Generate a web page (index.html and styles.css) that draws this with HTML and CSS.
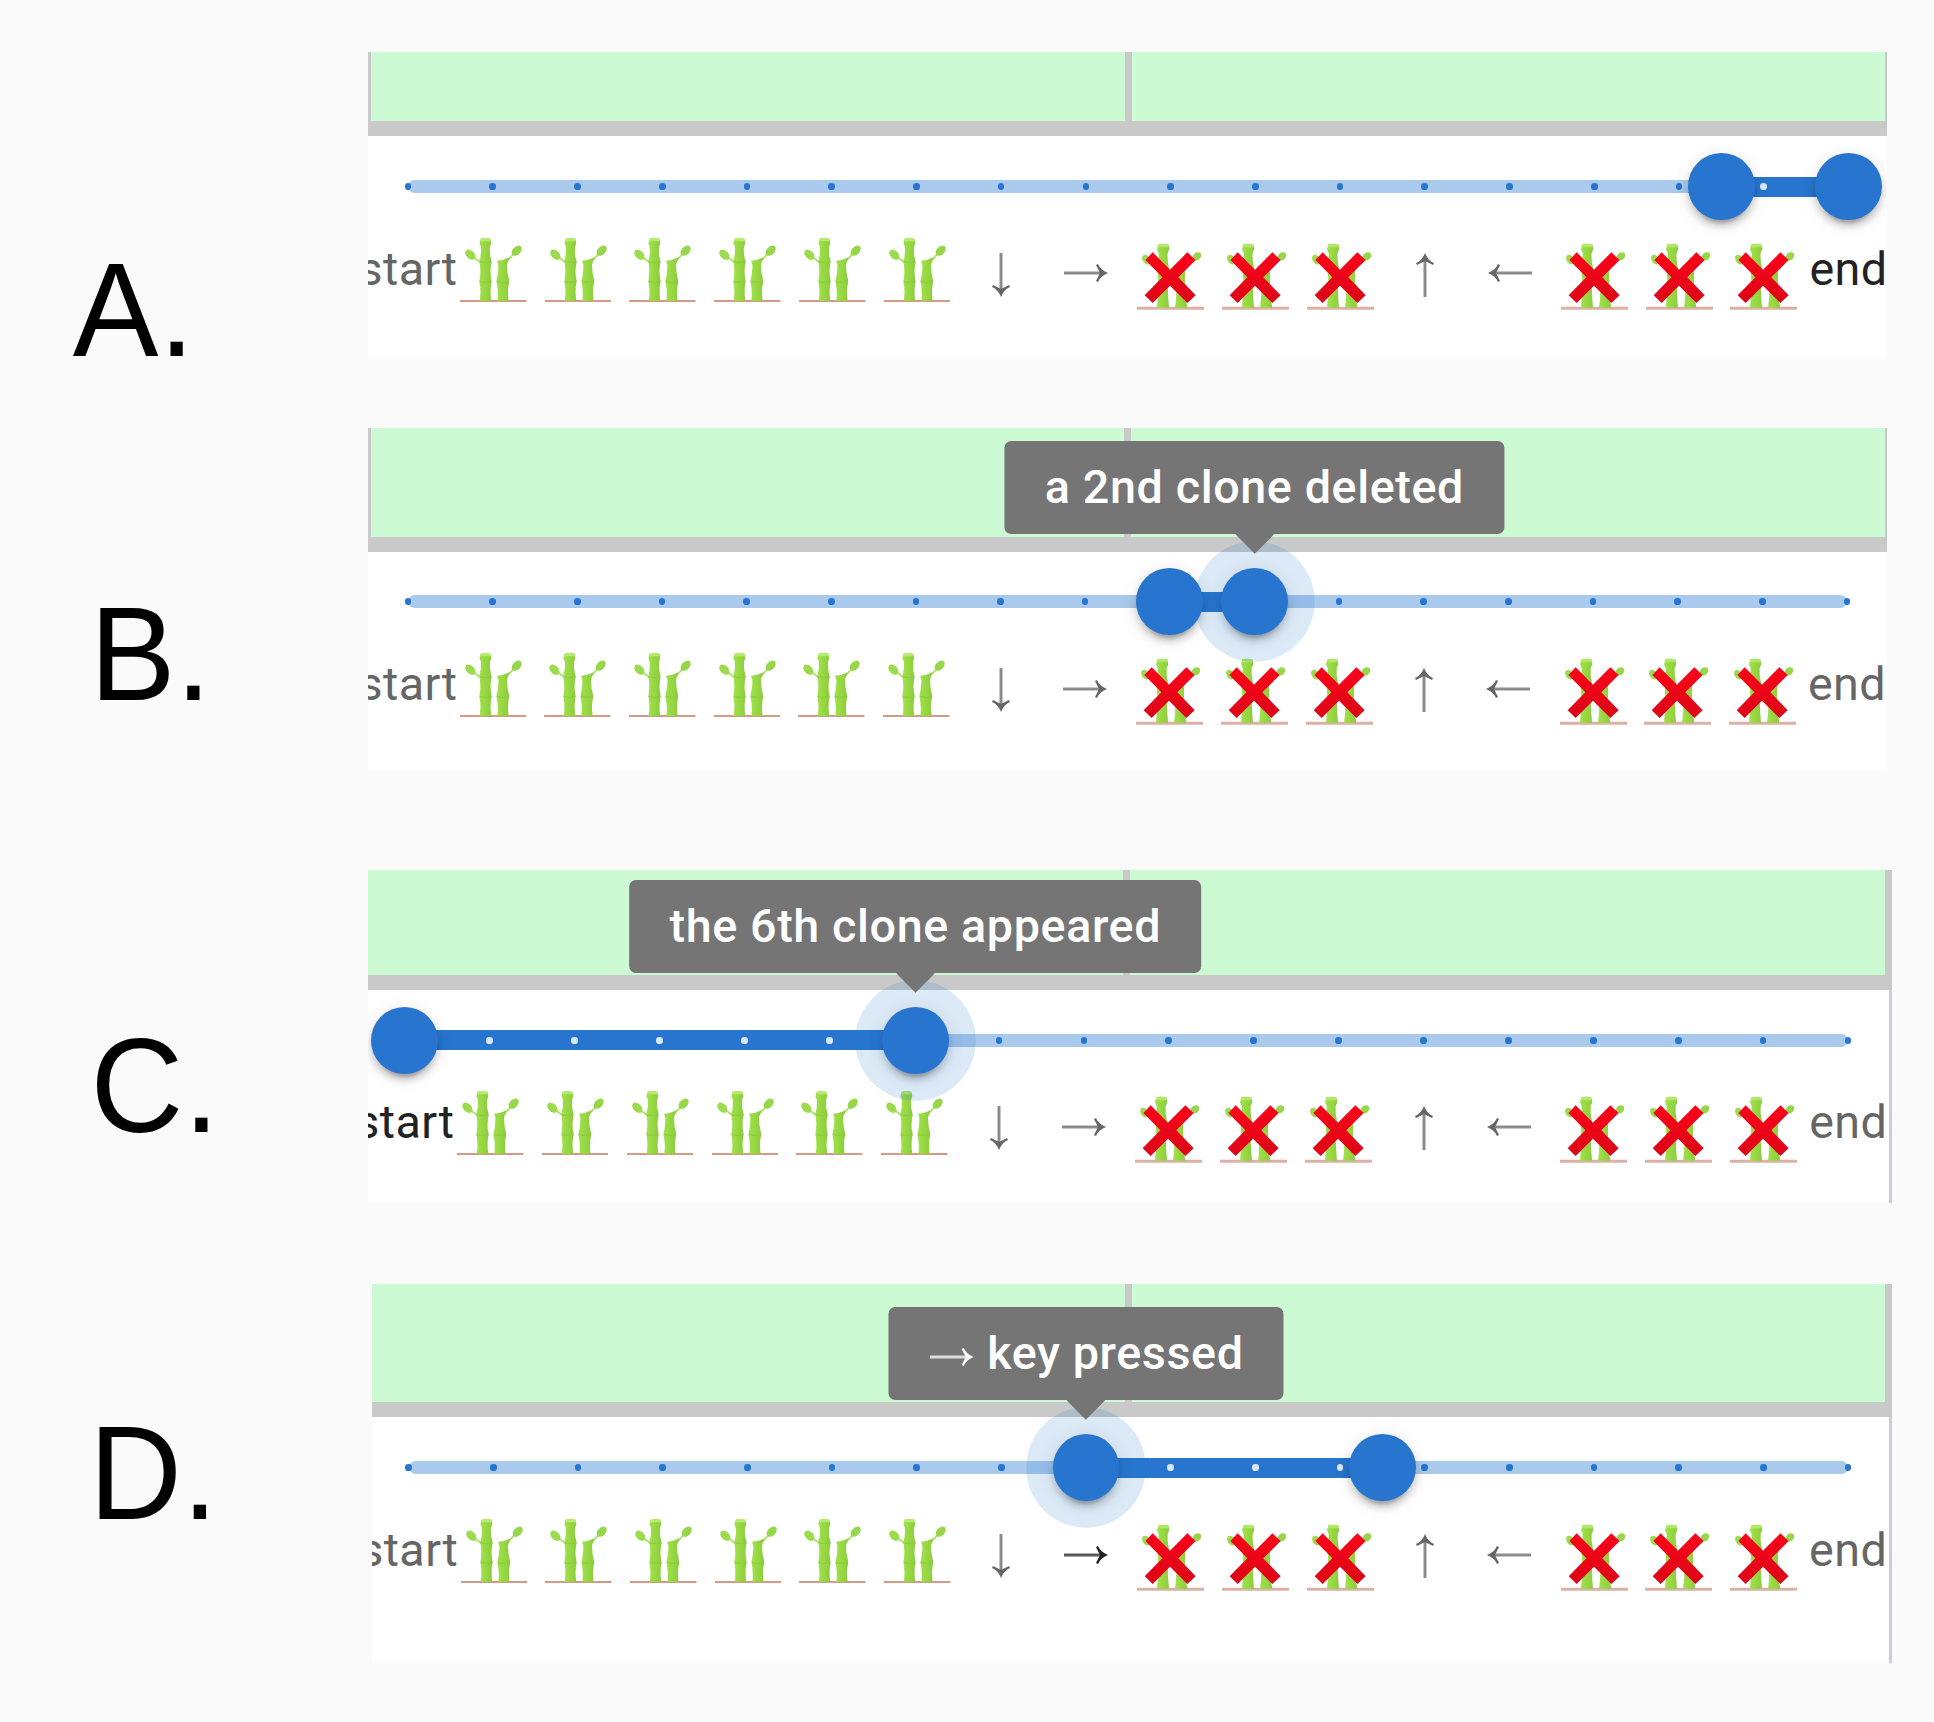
FILE: index.html
```html
<!DOCTYPE html>
<html lang="en">
<head>
<meta charset="utf-8">
<title>Timeline slider states</title>
<link rel="stylesheet" href="styles.css">
</head>
<body>
<svg class="defs" aria-hidden="true">
  <defs>
    <linearGradient id="stalk" x1="0" x2="1" y1="0" y2="0">
      <stop offset="0" stop-color="#a2e04f"/><stop offset=".55" stop-color="#95d73f"/><stop offset="1" stop-color="#8cca44"/>
    </linearGradient>
    <linearGradient id="cross" x1="0" x2="0" y1="0" y2="1">
      <stop offset="0" stop-color="#fb0319"/><stop offset="1" stop-color="#dc0617"/>
    </linearGradient>
    <symbol id="bamboo" viewBox="60 30 200 204">
      <path d="M60 228H260" stroke="#d39a88" stroke-width="6"/>
      <path d="M100 96L122 112M202 107L222 86" stroke="#b0e472" stroke-width="6" fill="none"/>
      <ellipse cx="91" cy="89" rx="18" ry="12" transform="rotate(45 91 89)" fill="#9cda4e"/>
      <ellipse cx="230" cy="77" rx="18" ry="12" transform="rotate(-46 230 77)" fill="#97d64b"/>
      <path d="M122 41Q136 37 151 41L154 55L150 66Q148 88 155 110Q148 138 155 169Q149 198 154 228H119Q124 198 118 169Q124 138 118 110Q124 88 123 66L118 55Z" fill="url(#stalk)"/>
      <path d="M171 107Q192 106 209 97L201 118Q201 145 208 169Q201 198 206 228H172Q176 198 169 169Q176 140 175 119Z" fill="url(#stalk)"/>
      <path d="M119 110Q136 116 154 110M119 169Q136 175 154 169M171 169Q189 175 206 169" stroke="#89c83d" stroke-width="4" opacity=".75" fill="none"/>
      <path d="M122 41Q136 37 151 41L152 49H121Z" fill="#b4ec6d"/>
    </symbol>
    <symbol id="removed" viewBox="50 45 201 210">
      <path d="M50 250H251" stroke="#dbb0a5" stroke-width="9"/>
      <ellipse cx="78" cy="104" rx="16" ry="11" transform="rotate(55 78 104)" fill="#9cda4e"/>
      <ellipse cx="230" cy="94" rx="14" ry="11" transform="rotate(-40 230 94)" fill="#97d64b"/>
      <path d="M114 58Q129 54 144 58L147 73L142 84Q140 105 146 130Q139 175 146 248H110Q117 175 111 130Q116 105 115 84L110 73Z" fill="url(#stalk)"/>
      <path d="M164 125H195Q191 200 201 248H164Q172 200 164 125Z" fill="url(#stalk)"/>
      <path d="M114 58Q129 54 143 58L144 67H113Z" fill="#b0e968"/>
      <path d="M97 82L149 134L201 82L226 105L174 157L226 211L201 234L149 182L97 234L73 211L126 157L75 105Z" fill="url(#cross)"/>
    </symbol>
    <symbol id="arrow-right" viewBox="0 0 44 44">
      <path d="M0 22H38" stroke="currentColor" stroke-width="3" opacity=".75"/>
      <path d="M44 22C39 24 35.500 27 34 31L32 30L36 22L32 14L34 13C35.500 17 39 20 44 22Z" fill="currentColor"/>
    </symbol>
  </defs>
</svg>

<main class="sheet">
  <section class="example example-a">
    <h2 class="letter">A.</h2>
    <div class="panel">
      <div class="stage"><div class="cell"></div><div class="cell"></div></div>
      <div class="slider">
        <div class="rail">
          <div class="track" style="left:91.18%;width:8.82%"></div>
          <div class="marks"><i></i><i></i><i></i><i></i><i></i><i></i><i></i><i></i><i></i><i></i><i></i><i></i><i></i><i></i><i></i><i></i><i class="on"></i><i></i></div>
          <div class="thumb" style="left:91.18%"></div>
          <div class="thumb" style="left:100%"></div>
        </div>
        <div class="labels">
          <span>start</span>
          <svg class="plant"><use href="#bamboo"/></svg><svg class="plant"><use href="#bamboo"/></svg><svg class="plant"><use href="#bamboo"/></svg><svg class="plant"><use href="#bamboo"/></svg><svg class="plant"><use href="#bamboo"/></svg><svg class="plant"><use href="#bamboo"/></svg>
          <svg class="arrow down"><use href="#arrow-right"/></svg><svg class="arrow"><use href="#arrow-right"/></svg>
          <svg class="gone"><use href="#removed"/></svg><svg class="gone"><use href="#removed"/></svg><svg class="gone"><use href="#removed"/></svg>
          <svg class="arrow up"><use href="#arrow-right"/></svg><svg class="arrow left"><use href="#arrow-right"/></svg>
          <svg class="gone"><use href="#removed"/></svg><svg class="gone"><use href="#removed"/></svg><svg class="gone"><use href="#removed"/></svg>
          <span class="active">end</span>
        </div>
      </div>
    </div>
  </section>

  <section class="example example-b">
    <h2 class="letter">B.</h2>
    <div class="panel">
      <div class="stage"><div class="cell"></div><div class="cell"></div></div>
      <div class="slider">
        <div class="rail">
          <div class="track" style="left:52.94%;width:5.88%"></div>
          <div class="marks"><i></i><i></i><i></i><i></i><i></i><i></i><i></i><i></i><i></i><i></i><i></i><i></i><i></i><i></i><i></i><i></i><i></i><i></i></div>
          <div class="thumb" style="left:52.94%"></div>
          <div class="thumb focus" style="left:58.82%"><div class="tip">a 2nd clone deleted</div></div>
        </div>
        <div class="labels">
          <span>start</span>
          <svg class="plant"><use href="#bamboo"/></svg><svg class="plant"><use href="#bamboo"/></svg><svg class="plant"><use href="#bamboo"/></svg><svg class="plant"><use href="#bamboo"/></svg><svg class="plant"><use href="#bamboo"/></svg><svg class="plant"><use href="#bamboo"/></svg>
          <svg class="arrow down"><use href="#arrow-right"/></svg><svg class="arrow"><use href="#arrow-right"/></svg>
          <svg class="gone"><use href="#removed"/></svg><svg class="gone"><use href="#removed"/></svg><svg class="gone"><use href="#removed"/></svg>
          <svg class="arrow up"><use href="#arrow-right"/></svg><svg class="arrow left"><use href="#arrow-right"/></svg>
          <svg class="gone"><use href="#removed"/></svg><svg class="gone"><use href="#removed"/></svg><svg class="gone"><use href="#removed"/></svg>
          <span>end</span>
        </div>
      </div>
    </div>
  </section>

  <section class="example example-c">
    <h2 class="letter">C.</h2>
    <div class="panel">
      <div class="stage"><div class="cell"></div><div class="cell"></div></div>
      <div class="slider">
        <div class="rail">
          <div class="track" style="left:0;width:35.37%"></div>
          <div class="marks"><i></i><i class="on"></i><i class="on"></i><i class="on"></i><i class="on"></i><i class="on"></i><i></i><i></i><i></i><i></i><i></i><i></i><i></i><i></i><i></i><i></i><i></i><i></i></div>
          <div class="thumb" style="left:0"></div>
          <div class="thumb focus" style="left:35.37%"><div class="tip">the 6th clone appeared</div></div>
        </div>
        <div class="labels">
          <span class="active">start</span>
          <svg class="plant"><use href="#bamboo"/></svg><svg class="plant"><use href="#bamboo"/></svg><svg class="plant"><use href="#bamboo"/></svg><svg class="plant"><use href="#bamboo"/></svg><svg class="plant"><use href="#bamboo"/></svg><svg class="plant"><use href="#bamboo"/></svg>
          <svg class="arrow down"><use href="#arrow-right"/></svg><svg class="arrow"><use href="#arrow-right"/></svg>
          <svg class="gone"><use href="#removed"/></svg><svg class="gone"><use href="#removed"/></svg><svg class="gone"><use href="#removed"/></svg>
          <svg class="arrow up"><use href="#arrow-right"/></svg><svg class="arrow left"><use href="#arrow-right"/></svg>
          <svg class="gone"><use href="#removed"/></svg><svg class="gone"><use href="#removed"/></svg><svg class="gone"><use href="#removed"/></svg>
          <span>end</span>
        </div>
      </div>
    </div>
  </section>

  <section class="example example-d">
    <h2 class="letter">D.</h2>
    <div class="panel">
      <div class="stage"><div class="cell"></div><div class="cell"></div></div>
      <div class="slider">
        <div class="rail">
          <div class="track" style="left:47.06%;width:20.59%"></div>
          <div class="marks"><i></i><i></i><i></i><i></i><i></i><i></i><i></i><i></i><i></i><i class="on"></i><i class="on"></i><i class="on"></i><i></i><i></i><i></i><i></i><i></i><i></i></div>
          <div class="thumb focus" style="left:47.06%"><div class="tip"><svg class="tip-arrow"><use href="#arrow-right"/></svg> key pressed</div></div>
          <div class="thumb" style="left:67.65%"></div>
        </div>
        <div class="labels">
          <span>start</span>
          <svg class="plant"><use href="#bamboo"/></svg><svg class="plant"><use href="#bamboo"/></svg><svg class="plant"><use href="#bamboo"/></svg><svg class="plant"><use href="#bamboo"/></svg><svg class="plant"><use href="#bamboo"/></svg><svg class="plant"><use href="#bamboo"/></svg>
          <svg class="arrow down"><use href="#arrow-right"/></svg><svg class="arrow active"><use href="#arrow-right"/></svg>
          <svg class="gone"><use href="#removed"/></svg><svg class="gone"><use href="#removed"/></svg><svg class="gone"><use href="#removed"/></svg>
          <svg class="arrow up"><use href="#arrow-right"/></svg><svg class="arrow left"><use href="#arrow-right"/></svg>
          <svg class="gone"><use href="#removed"/></svg><svg class="gone"><use href="#removed"/></svg><svg class="gone"><use href="#removed"/></svg>
          <span>end</span>
        </div>
      </div>
    </div>
  </section>
</main>
</body>
</html>
```

FILE: styles.css
```css
* { box-sizing: border-box; }

body {
  margin: 0;
  background: #fafafa;
  font-family: Roboto, "Liberation Sans", sans-serif;
}

.defs { display: block; width: 0; height: 0; }

.sheet {
  display: flex;
  flex-direction: column;
  height: 1722px;
  padding-top: 52px;
  overflow: hidden;
}

.example {
  --start: 40px;
  --span: 1440.500px;
  --left-edge: 0px;
  --left-cell: 757px;
  --right-edge: 2px;
  display: flex;
  flex: none;
}

.letter {
  flex: none;
  width: 368px;
  margin: 0;
  font: 400 133.3px/1 "Liberation Sans", Arial, sans-serif;
  color: #000;
  white-space: nowrap;
  transform: scaleX(.965);
  transform-origin: 0 0;
}

.panel {
  display: flex;
  flex-direction: column;
  width: 1519px;
  background: #fff;
  overflow: hidden;
}

.example-a { height: 307px; margin-bottom: 69px; --left-edge: 3px; --left-cell: 754px; --stage: 84.300px; }
.example-b { height: 343px; margin-bottom: 99px; --left-edge: 3px; --left-cell: 753px; --stage: 123.500px; --span: 1439px; }
.example-c { height: 333px; margin-bottom: 81px; --stage: 120px; --left-cell: 755px; --right-edge: 7px; --start: 36.800px; --span: 1443.400px; }
.example-d { height: 379.300px; --stage: 133.400px; --left-cell: 753px; --right-edge: 7px; --start: 36.700px; --span: 1439.400px; }

.example-a .letter { padding: 191px 0 0 75.500px; }
.example-b .letter { padding: 159px 0 0 93px; }
.example-c .letter { padding: 148.500px 0 0 93.800px; }
.example-d .letter { padding: 121.800px 0 0 92.300px; }

.example-c .panel { width: 1524px; }
.example-d .panel { width: 1520px; margin-left: 4px; }
.example-c .slider, .example-d .slider { border-right: 3.500px solid #cbced2; }

.stage {
  display: grid;
  grid-template-columns: var(--left-cell) 1fr;
  column-gap: 7px;
  flex: none;
  height: var(--stage);
  padding: 0 var(--right-edge) 15px var(--left-edge);
  background: #c9c9c9;
}

.cell { background: #ccfad3; }

.slider {
  flex: 1;
  padding: 43.600px 0 0 var(--start);
}

.rail {
  position: relative;
  display: flex;
  align-items: center;
  width: var(--span);
  height: 13.300px;
  border-radius: 6.700px;
  background: #a9caec;
}

.track {
  position: absolute;
  top: -3.300px;
  height: 20px;
  background: #2775ce;
}

.marks {
  position: relative;
  display: flex;
  flex: 1;
  justify-content: space-between;
  margin: 0 -3.350px;
}

.marks i {
  width: 6.700px;
  height: 6.700px;
  border-radius: 50%;
  background: #2775ce;
}

.marks .on { background: #d9e8f8; }

.thumb {
  position: absolute;
  z-index: 2;
  top: 50%;
  width: 66.700px;
  height: 66.700px;
  margin: -33.350px 0 0 -33.350px;
  border-radius: 50%;
  background: #2775ce;
  box-shadow: 0 10px 3.300px -6.700px rgba(0, 0, 0, .2), 0 6.700px 6.700px rgba(0, 0, 0, .14), 0 3.300px 16.700px rgba(0, 0, 0, .12);
}

.thumb.focus {
  box-shadow: 0 0 0 26.700px rgba(39, 117, 206, .16), 0 10px 3.300px -6.700px rgba(0, 0, 0, .2), 0 6.700px 6.700px rgba(0, 0, 0, .14), 0 3.300px 16.700px rgba(0, 0, 0, .12);
}

.tip {
  position: absolute;
  bottom: 100.700px;
  left: 50%;
  padding: 13.300px 40px;
  border-radius: 6.700px;
  background: #757575;
  color: #fff;
  font-size: 46.670px;
  font-weight: 500;
  line-height: 66.700px;
  letter-spacing: .62px;
  white-space: nowrap;
  transform: translateX(-50%);
}

.tip::after {
  content: "";
  position: absolute;
  bottom: -13.300px;
  left: 50%;
  width: 26.700px;
  height: 26.700px;
  margin-left: -13.350px;
  background: #757575;
  transform: rotate(45deg);
}

.tip-arrow { width: 44.400px; height: 44px; margin: 0 1px; vertical-align: -10px; }

.labels {
  display: grid;
  grid-template-columns: repeat(18, 1fr);
  justify-items: center;
  width: calc(var(--span) * 18 / 17);
  margin: 41.600px 0 0 calc(var(--span) / -34);
  color: #666;
  font-size: 46.670px;
  line-height: 66.700px;
  letter-spacing: .44px;
}

.labels span {
  display: flex;
  justify-content: center;
  width: 0;
  margin-top: 1px;
  white-space: nowrap;
}

.labels .active { color: #222; }

.plant { width: 66.700px; height: 68px; margin-left: 1px; }
.gone { width: 67px; height: 70px; margin-top: 5px; }
.arrow { width: 44px; height: 44px; margin-top: 16.700px; }
.down { margin-top: 18px; transform: rotate(90deg); }
.up { margin-top: 18px; transform: rotate(-90deg); }
.left { transform: rotate(180deg); }
```
